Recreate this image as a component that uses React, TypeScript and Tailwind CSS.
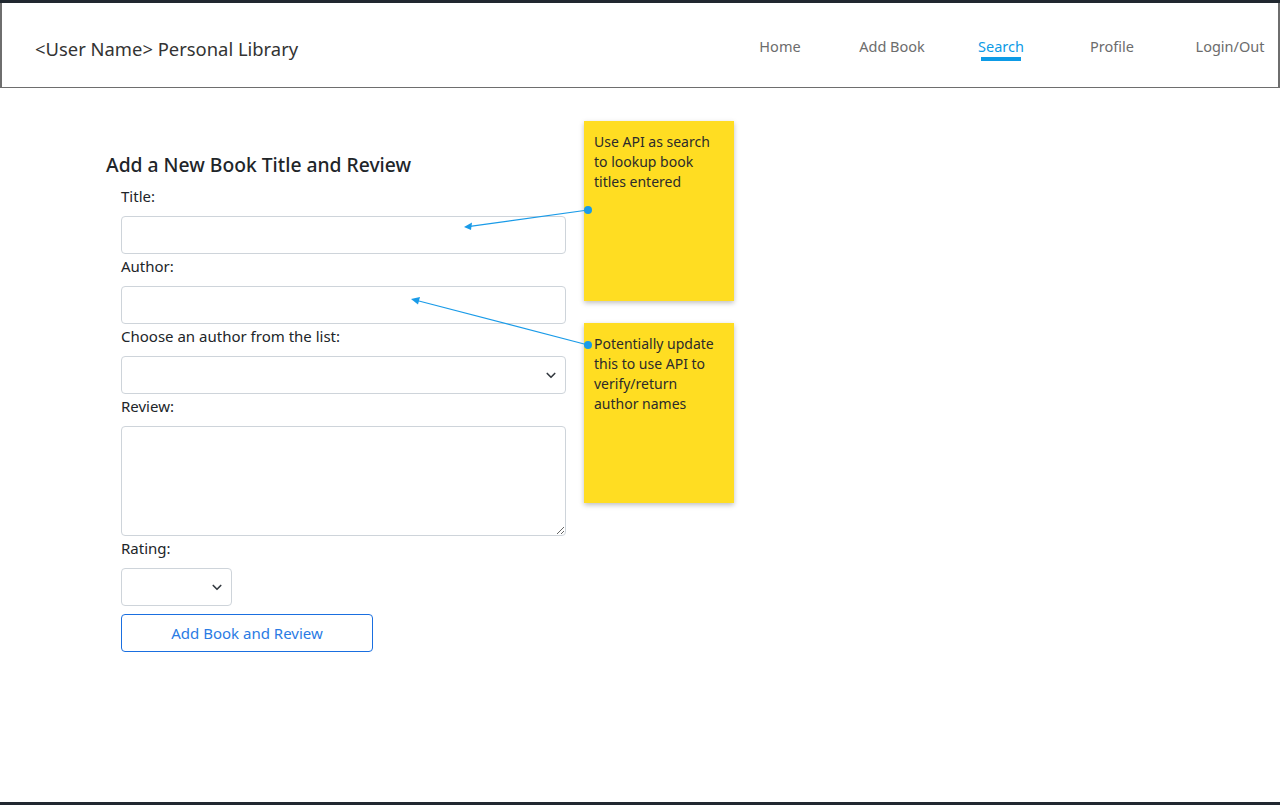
import React from 'react';

const navItems = [
    { label: 'Home', box: 'w-[100px]' },
    { label: 'Add Book', box: 'w-[100px] ml-[12px]' },
    { label: 'Search', box: 'w-[100px] ml-[9px]' },
    { label: 'Profile', box: 'w-[100px] ml-[11px]' },
    { label: 'Login/Out', box: 'w-[80px] ml-[28px]' },
];

const Chevron: React.FC = () => (
    <svg className="pointer-events-none absolute right-[9px] top-1/2 -translate-y-1/2" width="12" height="12" viewBox="0 0 16 16" fill="none">
        <path d="M3 6l5 5 5-5" stroke="#343a40" strokeWidth="2.2" strokeLinecap="round" strokeLinejoin="round" />
    </svg>
);

const Field: React.FC<{ label: string; children: React.ReactNode }> = ({ label, children }) => (
    <div className="flex flex-col">
        <label className="h-6 text-[15px] leading-6 text-[#212529] mb-2">{label}</label>
        {children}
    </div>
);

export default function App() {
    return (
        <div className="h-[805px] w-[1280px] flex flex-col bg-white border-t-[3px] border-b-[3px] border-[#212830] overflow-hidden" style={{ fontFamily: '"Noto Sans", "Open Sans", sans-serif' }}>
            <header className="h-[85px] shrink-0 flex items-center justify-between border-l-2 border-r-2 border-b border-[#6e6e6e] pl-[33px] pr-[8px]">
                <h1 className="text-[18.4px] text-[#333] mt-[7px]">&lt;User Name&gt; Personal Library</h1>
                <nav className="flex items-start mt-[5px]">
                    {navItems.map(item => (
                        <div key={item.label} className={`flex flex-col items-center ${item.box}`}>
                            <a className={`text-[14.5px] leading-6 ${item.label === 'Search' ? 'text-[#0d9be6]' : 'text-[#6c6c6c]'}`}>{item.label}</a>
                            {item.label === 'Search' && <span className="-mt-[1px] h-[4px] w-[40px] bg-[#0d9be6]" />}
                        </div>
                    ))}
                </nav>
            </header>

            <main className="relative flex-1">
                <section className="pl-[106px] pt-[63px]">
                    <h2 className="text-[19.3px] leading-7 font-medium text-[#212529] mb-[5px]">Add a New Book Title and Review</h2>
                    <form className="ml-[15px] w-[445px] flex flex-col" onSubmit={e => e.preventDefault()}>
                        <Field label="Title:">
                            <input className="h-[38px] border border-[#ced4da] rounded-[4px] px-3" />
                        </Field>
                        <Field label="Author:">
                            <input className="h-[38px] border border-[#ced4da] rounded-[4px] px-3" />
                        </Field>
                        <Field label="Choose an author from the list:">
                            <div className="relative">
                                <select className="w-full h-[38px] appearance-none border border-[#ced4da] rounded-[4px] px-3 bg-white" />
                                <Chevron />
                            </div>
                        </Field>
                        <Field label="Review:">
                            <textarea className="h-[110px] border border-[#ced4da] rounded-[4px] px-3 resize-y" />
                        </Field>
                        <Field label="Rating:">
                            <div className="relative w-[111px]">
                                <select className="w-full h-[38px] appearance-none border border-[#ced4da] rounded-[4px] px-3 bg-white" />
                                <Chevron />
                            </div>
                        </Field>
                        <button type="submit" className="mt-2 w-[252px] h-[38px] border border-[#1a6fe0] rounded-[4px] text-[15px] text-[#2a7be4] bg-white">
                            Add Book and Review
                        </button>
                    </form>
                </section>

                {/* sticky note annotations */}
                <div className="absolute left-[584px] top-[33px] w-[150px] h-[180px] bg-[#ffdd22] shadow-[0_2px_5px_rgba(0,0,0,0.25)] px-[10px] pt-[11px] text-[14px] leading-5 text-[#2b2b2b]">
                    Use API as search to lookup book titles entered
                </div>
                <div className="absolute left-[584px] top-[235px] w-[150px] h-[180px] bg-[#ffdd22] shadow-[0_2px_5px_rgba(0,0,0,0.25)] px-[10px] pt-[11px] text-[14px] leading-5 text-[#2b2b2b]">
                    Potentially update this to use API to verify/return author names
                </div>

                <svg className="absolute left-0 top-0 pointer-events-none" width="800" height="500" viewBox="0 88 800 500">
                    <line x1="588" y1="210" x2="470" y2="226.3" stroke="#1a9be8" strokeWidth="1.2" />
                    <path d="M464 227 L472 222.5 L471 230 Z" fill="#1a9be8" />
                    <circle cx="588" cy="210" r="4" fill="#1a9be8" />
                    <line x1="588" y1="345" x2="417" y2="300.5" stroke="#1a9be8" strokeWidth="1.2" />
                    <path d="M411 299 L420 297 L418 304.5 Z" fill="#1a9be8" />
                    <circle cx="588" cy="345" r="4" fill="#1a9be8" />
                </svg>
            </main>
        </div>
    );
}
